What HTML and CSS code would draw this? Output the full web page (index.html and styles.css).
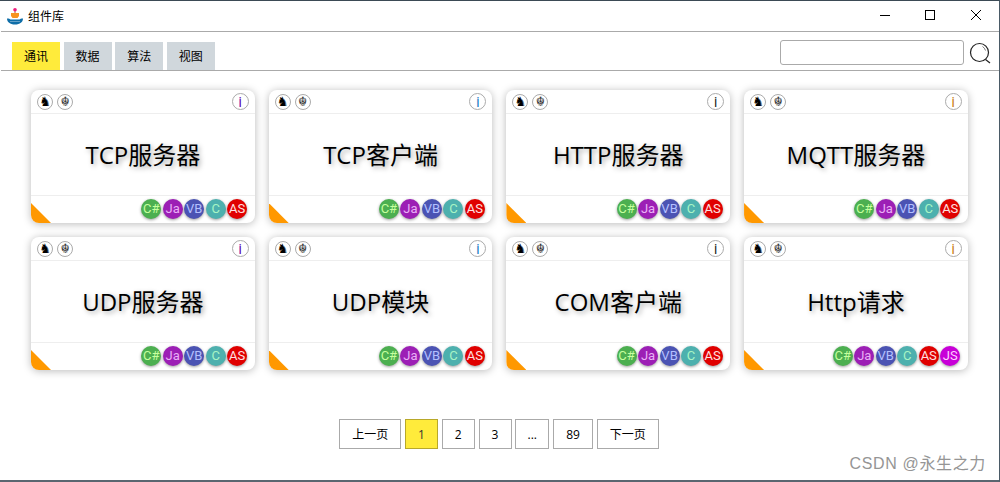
FILE: index.html
```html
<!DOCTYPE html>
<html lang="zh">
<head>
<meta charset="utf-8">
<title>组件库</title>
<link rel="stylesheet" href="styles.css">
</head>
<body>
<div class="window">
  <header class="titlebar">
    <svg class="logo" viewBox="0 0 17 17" width="17" height="17"><circle cx="8" cy="1.800" r="1.800" fill="#ee1c7c"/><path d="M7.500 3h1v2h-1z" fill="#b5503c"/><path d="M4 5h8v3l-1.500 2h-5L4 8z" fill="#f7931e"/><path d="M0 10.500c2 0 3 .5 3.500 1h9c.5-.5 1.500-1 3.500-1 0 3.500-3 6-8 6s-8-2.500-8-6z" fill="#0f6ea8"/><path d="M3 13.500h10" stroke="#fff" stroke-width=".6" opacity=".6"/></svg>
    <span class="app-title">组件库</span>
    <div class="controls">
      <svg width="46" height="30" viewBox="0 0 46 30"><path d="M19 14.500h10" stroke="#000" fill="none"/></svg>
      <svg width="46" height="30" viewBox="0 0 46 30"><rect x="18.500" y="9.500" width="9" height="9" stroke="#000" fill="none"/></svg>
      <svg width="46" height="30" viewBox="0 0 46 30"><path d="M18 9l10 10M28 9L18 19" stroke="#000" fill="none"/></svg>
    </div>
  </header>
  <nav class="toolbar">
    <div class="tabs">
      <span class="tab active">通讯</span>
      <span class="tab">数据</span>
      <span class="tab">算法</span>
      <span class="tab">视图</span>
    </div>
    <div class="search">
      <input class="search-input" type="text">
      <svg width="22" height="22" viewBox="0 0 22 22"><circle cx="10.500" cy="10.500" r="9" fill="none" stroke="#222" stroke-width="1.200"/><path d="M16.500 17.500l4.500 3.500" stroke="#222" stroke-width="1.200" fill="none"/><path d="M13.500 4.500a7 7 0 0 1 3 4" stroke="#777" fill="none"/></svg>
    </div>
  </nav>
  <main class="grid">
    <article class="card"><div class="card-top"><span class="mini">♞</span><span class="mini">☬</span><span class="info purple">i</span></div><h2 class="card-title">TCP服务器</h2><div class="card-foot"><span class="corner"></span><span class="lang csharp">C#</span><span class="lang java">Ja</span><span class="lang vb">VB</span><span class="lang c">C</span><span class="lang as">AS</span></div></article>
    <article class="card"><div class="card-top"><span class="mini">♞</span><span class="mini">☬</span><span class="info blue">i</span></div><h2 class="card-title">TCP客户端</h2><div class="card-foot"><span class="corner"></span><span class="lang csharp">C#</span><span class="lang java">Ja</span><span class="lang vb">VB</span><span class="lang c">C</span><span class="lang as">AS</span></div></article>
    <article class="card"><div class="card-top"><span class="mini">♞</span><span class="mini">☬</span><span class="info black">i</span></div><h2 class="card-title">HTTP服务器</h2><div class="card-foot"><span class="corner"></span><span class="lang csharp">C#</span><span class="lang java">Ja</span><span class="lang vb">VB</span><span class="lang c">C</span><span class="lang as">AS</span></div></article>
    <article class="card"><div class="card-top"><span class="mini">♞</span><span class="mini">☬</span><span class="info orange">i</span></div><h2 class="card-title">MQTT服务器</h2><div class="card-foot"><span class="corner"></span><span class="lang csharp">C#</span><span class="lang java">Ja</span><span class="lang vb">VB</span><span class="lang c">C</span><span class="lang as">AS</span></div></article>
    <article class="card"><div class="card-top"><span class="mini">♞</span><span class="mini">☬</span><span class="info purple">i</span></div><h2 class="card-title">UDP服务器</h2><div class="card-foot"><span class="corner"></span><span class="lang csharp">C#</span><span class="lang java">Ja</span><span class="lang vb">VB</span><span class="lang c">C</span><span class="lang as">AS</span></div></article>
    <article class="card"><div class="card-top"><span class="mini">♞</span><span class="mini">☬</span><span class="info blue">i</span></div><h2 class="card-title">UDP模块</h2><div class="card-foot"><span class="corner"></span><span class="lang csharp">C#</span><span class="lang java">Ja</span><span class="lang vb">VB</span><span class="lang c">C</span><span class="lang as">AS</span></div></article>
    <article class="card"><div class="card-top"><span class="mini">♞</span><span class="mini">☬</span><span class="info black">i</span></div><h2 class="card-title">COM客户端</h2><div class="card-foot"><span class="corner"></span><span class="lang csharp">C#</span><span class="lang java">Ja</span><span class="lang vb">VB</span><span class="lang c">C</span><span class="lang as">AS</span></div></article>
    <article class="card"><div class="card-top"><span class="mini">♞</span><span class="mini">☬</span><span class="info orange">i</span></div><h2 class="card-title">Http请求</h2><div class="card-foot"><span class="corner"></span><span class="lang csharp">C#</span><span class="lang java">Ja</span><span class="lang vb">VB</span><span class="lang c">C</span><span class="lang as">AS</span><span class="lang js">JS</span></div></article>
  </main>
  <div class="pager">
    <span class="page wide">上一页</span>
    <span class="page current">1</span>
    <span class="page">2</span>
    <span class="page">3</span>
    <span class="page dots">...</span>
    <span class="page num">89</span>
    <span class="page wide">下一页</span>
  </div>
  <div class="watermark">CSDN @永生之力</div>
</div>
</body>
</html>
```
FILE: styles.css
```css
* { box-sizing: border-box; }
html, body { margin: 0; height: 100%; background: #fff; overflow: hidden; }
body { font-family: "Open Sans", "Noto Sans CJK SC", sans-serif; color: #000; }
.window { position: relative; width: 1000px; height: 482px; border-top: 1px solid #3b4a55; border-right: 1px solid #4a5a66; border-bottom: 2px solid #5a6670; padding-left: 1px; display: flex; flex-direction: column; }
.titlebar { height: 31px; flex: none; display: flex; align-items: center; padding-left: 6px; border-bottom: 1px solid #aaa; }
.logo { flex: none; }
.app-title { font-size: 12px; margin-left: 4px; }
.controls { margin-left: auto; display: flex; }
.controls svg { display: block; }
.toolbar { height: 39px; flex: none; display: flex; align-items: flex-end; justify-content: space-between; border-bottom: 1px solid #aaa; padding-left: 11px; }
.tabs { display: flex; gap: 3.600px; }
.tab { width: 48px; height: 28px; background: #d0d7dc; font-size: 12px; display: flex; align-items: center; justify-content: center; }
.tab.active { background: #ffeb3b; }
.search { display: flex; align-items: center; gap: 5px; margin: 0 8px 5px 0; }
.search-input { width: 184px; height: 25px; border: 1px solid #aaa; border-radius: 3px; background: #fff; padding: 0; }
.search svg { display: block; }
.grid { display: grid; grid-template-columns: repeat(4, 223.700px); grid-auto-rows: 133px; column-gap: 14px; row-gap: 14px; padding: 19px 0 0 30px; flex: none; }
.card { background: #fff; border-radius: 8px; box-shadow: 0 1px 8px rgba(0,0,0,.28); display: flex; flex-direction: column; overflow: hidden; }
.card-top { height: 24px; flex: none; display: flex; align-items: center; gap: 4px; padding: 0 6px; border-bottom: 1px solid #eee; }
.mini { width: 16px; height: 16px; border-radius: 50%; border: 1px solid #aaa; display: flex; align-items: center; justify-content: center; font: 13px/14px "DejaVu Sans", sans-serif; color: #000; }
.mini + .mini { color: #3c3c3c; }
.info { margin-left: auto; width: 17px; height: 17px; border-radius: 50%; border: 1px solid #aaa; font: 15px/15px "Open Sans", sans-serif; text-align: center; }
.purple { color: #5b00a8; }
.blue { color: #1777c4; }
.black { color: #222; }
.orange { color: #c8790c; }
.card-title { flex: 1; margin: 0; padding-bottom: 2px; display: flex; align-items: center; justify-content: center; font-size: 24px; font-weight: 400; text-shadow: 2px 2px 5px rgba(0,0,0,.35); }
.card-foot { position: relative; height: 28px; flex: none; border-top: 1px solid #eee; display: flex; align-items: center; justify-content: flex-end; gap: 1.500px; padding: 0 7.500px 1px 0; }
.corner { position: absolute; left: 0; bottom: 0; width: 20px; height: 20px; background: #ff9800; clip-path: polygon(0 0, 100% 100%, 0 100%); }
.lang { width: 20px; height: 20px; border-radius: 50%; font: 13px/20px Roboto, sans-serif; display: flex; align-items: center; justify-content: center; box-shadow: 0 1px 3px rgba(0,0,0,.4); }
.csharp { background: #4caf50; color: #c6ff9e; }
.java { background: #9c1fb5; color: #e9b0f5; }
.vb { background: #4b53b3; color: #b4c0ff; }
.c { background: #4db0ae; color: #a8f5c5; }
.as { background: #e00000; color: #ffe0e0; }
.js { background: #c800d8; color: #ffd0ff; }
.pager { display: flex; gap: 3.750px; justify-content: center; padding: 49px 2px 0 0; }
.page { width: 33px; height: 30px; border: 1px solid #aaa; font-size: 12px; display: flex; align-items: center; justify-content: center; }
.page.wide { width: 62px; }
.page.dots { width: 34px; }
.page.num { width: 40px; }
.page.current { background: #ffeb3b; border-color: #b8a82a; color: #333; }
.watermark { position: absolute; right: 13px; bottom: 6px; font: 16px "Liberation Sans", "Noto Sans CJK SC", sans-serif; color: #959595; letter-spacing: .65px; }
```
